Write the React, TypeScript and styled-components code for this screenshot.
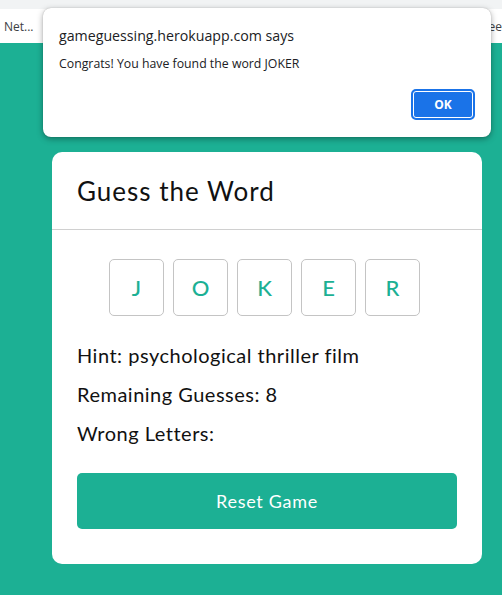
import React from "react";
import styled, { createGlobalStyle } from "styled-components";

const TEAL = "#1cb094";

const Global = createGlobalStyle`
  html, body { margin: 0; padding: 0; }
  body { background: ${TEAL}; width: 502px; height: 595px; overflow: hidden; }
`;

const Page = styled.div`
  position: relative;
  width: 502px;
  height: 595px;
  background: ${TEAL};
`;

const TabStrip = styled.div`
  height: 9px;
  background: #f1f3f4;
`;

const Bookmarks = styled.div`
  height: 34px;
  background: #ffffff;
  display: flex;
  align-items: center;
  justify-content: space-between;
  padding: 0 0 0 4px;
  font-family: "Open Sans", "Noto Sans", sans-serif;
  font-size: 12px;
  color: #3c4043;
  overflow: hidden;
`;

const Main = styled.main`
  display: flex;
  justify-content: flex-start;
  padding: 109px 0 0 52px;
`;

const Card = styled.section`
  width: 430px;
  background: #ffffff;
  border-radius: 10px;
  font-family: "Lato", "Open Sans", sans-serif;
  color: #111;
`;

const CardHeader = styled.header`
  height: 77px;
  display: flex;
  align-items: center;
  padding: 0 25px;
  border-bottom: 1px solid #d0d0d0;
`;

const Title = styled.h1`
  margin: 0;
  font-size: 26px;
  font-weight: 400;
  letter-spacing: 1px;
  padding-top: 0;
`;

const CardBody = styled.div`
  padding: 29px 25px 35px;
  display: flex;
  flex-direction: column;
`;

const Letters = styled.div`
  display: flex;
  justify-content: center;
  gap: 9px;
  margin-bottom: 19px;
  padding-right: 5px;
`;

const LetterBox = styled.div`
  width: 55px;
  height: 57px;
  box-sizing: border-box;
  border: 1px solid #c4c4c4;
  border-radius: 5px;
  display: flex;
  align-items: center;
  justify-content: center;
  color: ${TEAL};
  font-size: 22px;
  font-weight: 500;
`;

const Info = styled.p`
  margin: 0;
  height: 39px;
  display: flex;
  align-items: center;
  font-size: 20px;
  letter-spacing: 0.5px;
`;

const ResetButton = styled.button`
  margin-top: 21px;
  height: 56px;
  width: 380px;
  border: none;
  border-radius: 5px;
  background: ${TEAL};
  color: #ffffff;
  font-family: "Lato", "Open Sans", sans-serif;
  font-size: 18px;
  letter-spacing: 0.7px;
`;

const Dialog = styled.div`
  position: absolute;
  left: 43px;
  top: 8px;
  width: 448px;
  height: 129px;
  box-sizing: border-box;
  background: #ffffff;
  border-radius: 8px;
  box-shadow: 0 2px 6px rgba(0, 0, 0, 0.35), 0 0 1px rgba(0, 0, 0, 0.3);
  padding: 18px 16px 0 16px;
  display: flex;
  flex-direction: column;
  font-family: "Open Sans", "Noto Sans", sans-serif;
  color: #202124;
`;

const DialogTitle = styled.div`
  font-size: 14.2px;
  line-height: 20px;
`;

const DialogMessage = styled.div`
  font-size: 12.3px;
  line-height: 16px;
  margin-top: 10px;
`;

const DialogActions = styled.div`
  display: flex;
  justify-content: flex-end;
  margin-top: 17px;
`;

const OkButton = styled.button`
  width: 64px;
  height: 31px;
  border-radius: 5px;
  background: #1a73e8;
  color: #fff;
  font-family: "Open Sans", "Noto Sans", sans-serif;
  font-weight: 700;
  font-size: 12px;
  border: 2px solid #1a73e8;
  box-shadow: inset 0 0 0 1px #ffffff;
`;

export default function App() {
  const word = ["J", "O", "K", "E", "R"];
  return (
    <>
      <Global />
      <Page>
        <TabStrip />
        <Bookmarks>
          <span>Net...</span>
          <span>ee</span>
        </Bookmarks>
        <Main>
          <Card>
            <CardHeader>
              <Title>Guess the Word</Title>
            </CardHeader>
            <CardBody>
              <Letters>
                {word.map((l, i) => (
                  <LetterBox key={i}>{l}</LetterBox>
                ))}
              </Letters>
              <Info>Hint: psychological thriller film</Info>
              <Info>Remaining Guesses: 8</Info>
              <Info>Wrong Letters:</Info>
              <ResetButton>Reset Game</ResetButton>
            </CardBody>
          </Card>
        </Main>
        <Dialog>
          <DialogTitle>gameguessing.herokuapp.com says</DialogTitle>
          <DialogMessage>Congrats! You have found the word JOKER</DialogMessage>
          <DialogActions>
            <OkButton>OK</OkButton>
          </DialogActions>
        </Dialog>
      </Page>
    </>
  );
}
